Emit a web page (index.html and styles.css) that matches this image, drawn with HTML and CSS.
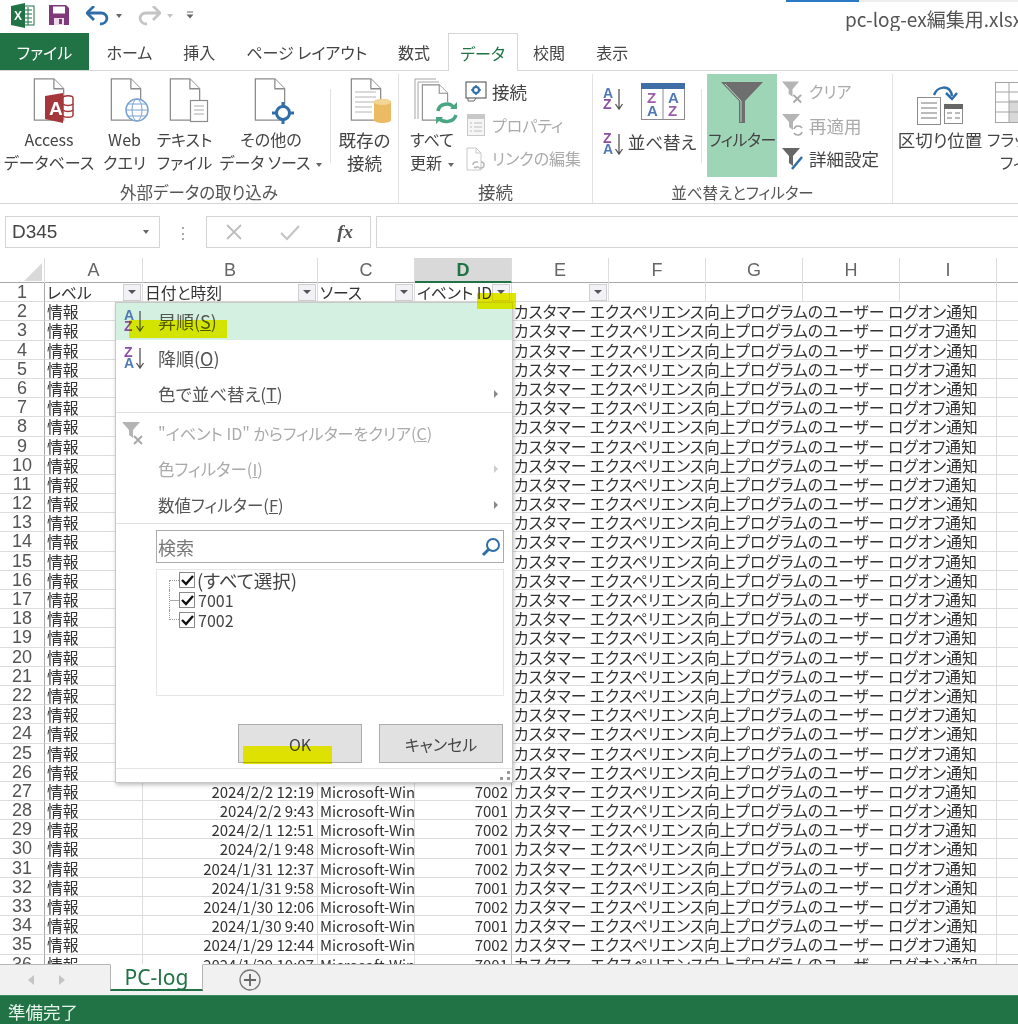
FILE: index.html
```html
<!DOCTYPE html>
<html lang="ja">
<head>
    <meta charset="UTF-8">
    <title>pc-log-ex編集用.xlsx - Excel</title>
    <link rel="stylesheet" href="styles.css">
</head>
<body>
<svg class="defs" width="0" height="0">
    <symbol id="doc" viewBox="0 0 32 44"><path d="M1 1H21L31 11V43H1Z" fill="#fff" stroke="#8c8c8c" stroke-width="1.3"/><path d="M21 1V11H31" fill="#fff" stroke="#8c8c8c" stroke-width="1.3"/></symbol>
    <symbol id="funnel-clear" viewBox="0 0 24 24"><path d="M1 1H19L12 9V17L8 14V9Z" fill="#b4b4b4"/><path d="M13 15L21 23M21 15L13 23" stroke="#a9a9a9" stroke-width="2"/></symbol>
</svg>

<div class="app">
    <!-- Title bar -->
    <div class="titlebar">
        <svg class="qat-excel" width="24" height="25" viewBox="0 0 24 25"><rect x="8" y="3" width="15" height="19" fill="#fff" stroke="#217346"/><path d="M13 7H21M13 11H21M13 15H21M13 19H21M17 4V22" stroke="#217346"/><path d="M0 3L14 0V25L0 22Z" fill="#217346"/><text x="3" y="17" class="ico-x">X</text></svg>
        <svg class="qat-save" width="20" height="20" viewBox="0 0 20 20"><path d="M0 0H17L20 3V20H0Z" fill="#80397b"/><rect x="4" y="1.500" width="12" height="7" fill="#fff"/><rect x="5" y="13" width="10" height="7" fill="#eadcea"/><rect x="10" y="14" width="3" height="5" fill="#80397b"/></svg>
        <svg class="qat-undo" width="24" height="20" viewBox="0 0 24 20"><path d="M2 7H15C23 7 23 18 14 18" fill="none" stroke="#2f6ea8" stroke-width="2.800"/><path d="M8 0L1 7L8 14" fill="none" stroke="#2f6ea8" stroke-width="2.800"/></svg>
        <span class="caret caret-qat"></span>
        <svg class="qat-redo" width="24" height="20" viewBox="0 0 24 20"><path d="M22 7H9C1 7 1 18 10 18" fill="none" stroke="#c4c4c4" stroke-width="2.800"/><path d="M16 0L23 7L16 14" fill="none" stroke="#c4c4c4" stroke-width="2.800"/></svg>
        <span class="caret caret-qat caret-off"></span>
        <svg class="qat-more" width="8" height="8" viewBox="0 0 8 8"><path d="M1 1H7" stroke="#666"/><path d="M0.500 3.500H7.500L4 7.500Z" fill="#666"/></svg>
        <div class="title-right">
            <div class="title-strip"><span class="strip-blue"></span><span class="strip-grey"></span></div>
            <div class="title-text">pc-log-ex編集用.xlsx</div>
        </div>
    </div>

    <!-- Tabs -->
    <div class="tabs">
        <div class="tab tab-file">ファイル</div>
        <div class="tab">ホーム</div>
        <div class="tab">挿入</div>
        <div class="tab">ページ レイアウト</div>
        <div class="tab">数式</div>
        <div class="tab tab-active">データ</div>
        <div class="tab">校閲</div>
        <div class="tab">表示</div>
    </div>

    <!-- Ribbon -->
    <div class="ribbon">
        <div class="group group-ext">
            <div class="group-body">
                <div class="cmd cmd-access">
                    <svg class="cmd-icon" width="52" height="48" viewBox="0 0 52 48"><use href="#doc" x="10" y="1" width="32" height="43"/><path d="M50 21C50 18 40 18 40 21V38C40 41 50 41 50 38Z" fill="#fff" stroke="#a4373a" stroke-width="1.500"/><path d="M40 27C42 29 48 29 50 27M40 33C42 35 48 35 50 33" fill="none" stroke="#a4373a" stroke-width="1.500"/><path d="M22 19L40 16V46L22 42Z" fill="#a4373a"/><text x="26" y="38" class="ico-access">A</text></svg>
                    <span>Access</span><span>データベース</span>
                </div>
                <div class="cmd cmd-web">
                    <svg class="cmd-icon" width="48" height="48" viewBox="0 0 48 48"><use href="#doc" x="9" y="1" width="32" height="43"/><circle cx="36" cy="33" r="11" fill="#fff" stroke="#7ba3cf" stroke-width="1.500"/><ellipse cx="36" cy="33" rx="5" ry="11" fill="none" stroke="#7ba3cf"/><path d="M25 33H47M27 27H45M27 39H45" stroke="#7ba3cf"/></svg>
                    <span>Web</span><span>クエリ</span>
                </div>
                <div class="cmd cmd-text">
                    <svg class="cmd-icon" width="48" height="48" viewBox="0 0 48 48"><use href="#doc" x="8" y="1" width="32" height="43"/><rect x="29.500" y="23.500" width="17" height="21" fill="#fff" stroke="#8c8c8c" stroke-width="1.200"/><path d="M33 29H43M33 33H43M33 37H43" stroke="#aaa"/></svg>
                    <span>テキスト</span><span>ファイル</span>
                </div>
                <div class="cmd cmd-other">
                    <svg class="cmd-icon" width="44" height="48" viewBox="0 0 44 48"><use href="#doc" x="2" y="1" width="32" height="43"/><circle cx="31" cy="36" r="6.500" fill="#fff" stroke="#2f6ea8" stroke-width="3"/><path d="M31 25V29M31 43V47M20 36H24M38 36H42" stroke="#2f6ea8" stroke-width="3"/></svg>
                    <span>その他の</span><span>データ ソース<i class="caret caret-inline"></i></span>
                </div>
                <div class="sep"></div>
                <div class="cmd cmd-existing big">
                    <svg class="cmd-icon" width="52" height="48" viewBox="0 0 52 48"><use href="#doc" x="11" y="1" width="32" height="43"/><path d="M16 15H37M16 20H37M16 25H37M16 30H33M16 35H33" stroke="#b4b4b4"/><path d="M35 25C35 21 52 21 52 25V43C52 47 35 47 35 43Z" fill="#eabb63"/><ellipse cx="43.500" cy="25" rx="8.500" ry="3" fill="#f3d596"/></svg>
                    <span>既存の</span><span>接続</span>
                </div>
            </div>
            <div class="group-label label-wide">外部データの取り込み</div>
        </div>

        <div class="group group-conn">
            <div class="group-body">
                <div class="cmd cmd-refresh">
                    <svg class="cmd-icon" width="52" height="48" viewBox="0 0 52 48"><path d="M9 42V2H30M12 42V5H33" fill="none" stroke="#a5a5a5"/><use href="#doc" x="15" y="7" width="28" height="37"/><circle cx="41" cy="36" r="11" fill="#fff"/><path d="M32 34C33 27 44 24 48 31M50 38C48 45 37 47 33 41" fill="none" stroke="#4aa583" stroke-width="3.500"/><path d="M44 32H51V25ZM37 40H30V47Z" fill="#4aa583"/></svg>
                    <span>すべて</span><span>更新<i class="caret caret-inline"></i></span>
                </div>
                <div class="stack">
                    <div class="stack-row big">
                        <svg width="22" height="22" viewBox="0 0 22 22"><rect x="1" y="1" width="20" height="16" fill="#fff" stroke="#666" stroke-width="1.200"/><path d="M3 17V20H9L11 17" fill="none" stroke="#666"/><circle cx="11" cy="9" r="3" fill="#fff" stroke="#2f6ea8" stroke-width="2"/><path d="M11 4V6M11 12V14M6 9H8M14 9H16" stroke="#2f6ea8" stroke-width="1.500"/></svg>
                        <span>接続</span>
                    </div>
                    <div class="stack-row stack-off">
                        <svg width="22" height="24" viewBox="0 0 22 24"><rect x="2.500" y="1.500" width="17" height="21" fill="#f6f6f6" stroke="#c8c8c8"/><path d="M3 2H19V6H3Z" fill="#c8c8c8"/><path d="M5 10H7M9 10H17M5 14H7M9 14H17M5 18H7M9 18H17" stroke="#bcbcbc"/></svg>
                        <span>プロパティ</span>
                    </div>
                    <div class="stack-row stack-off">
                        <svg width="22" height="24" viewBox="0 0 22 24"><path d="M2 23V1H11L16 6V23Z" fill="#fff" stroke="#c8c8c8"/><path d="M11 1V6H16" fill="none" stroke="#c8c8c8"/><path d="M8 18A3 3 0 0 1 11 15H13M14 20H12A3 3 0 0 1 9 20M16 15A3 3 0 0 1 19 18A3 3 0 0 1 16 21H14" fill="none" stroke="#b8b8b8" stroke-width="1.500"/></svg>
                        <span>リンクの編集</span>
                    </div>
                </div>
            </div>
            <div class="group-label big">接続</div>
        </div>

        <div class="group group-sort">
            <div class="group-body">
                <div class="sort-col">
                    <svg width="24" height="26" viewBox="0 0 24 26"><text x="0" y="11" class="ico-a">A</text><text x="0" y="22" class="ico-z">Z</text><path d="M16 2V21M12.500 17L16 22L19.500 17" fill="none" stroke="#555" stroke-width="1.300"/></svg>
                    <svg width="24" height="26" viewBox="0 0 24 26"><text x="0" y="11" class="ico-z">Z</text><text x="0" y="22" class="ico-a">A</text><path d="M16 2V21M12.500 17L16 22L19.500 17" fill="none" stroke="#555" stroke-width="1.300"/></svg>
                </div>
                <div class="cmd cmd-sort big">
                    <svg class="cmd-icon" width="44" height="38" viewBox="0 0 44 38"><rect x="0.500" y="0.500" width="43" height="36" fill="#fff" stroke="#8c8c8c"/><rect x="0" y="0" width="44" height="6" fill="#3f6ea6"/><path d="M22 6V37" stroke="#8c8c8c"/><text x="6" y="20" class="ico-z2">Z</text><text x="6" y="33" class="ico-a2">A</text><text x="27" y="20" class="ico-a2">A</text><text x="27" y="33" class="ico-z2">Z</text></svg>
                    <span>並べ替え</span>
                </div>
                <div class="sep sep-sort"></div>
                <div class="cmd cmd-filter">
                    <svg class="cmd-icon" width="42" height="44" viewBox="0 0 42 44"><path d="M0 1H42L24 20V42H18V20Z" fill="#6e6e6e"/><path d="M4 3L20 20V41" fill="none" stroke="#b9d9c8" stroke-width="1"/></svg>
                    <span>フィルター</span>
                </div>
                <div class="stack stack-filter">
                    <div class="stack-row stack-off">
                        <svg width="23" height="24"><use href="#funnel-clear"/></svg>
                        <span>クリア</span>
                    </div>
                    <div class="stack-row stack-off big">
                        <svg width="23" height="24" viewBox="0 0 23 24"><path d="M1 1H19L12 9V17L8 14V9Z" fill="#b4b4b4"/><path d="M13 16A4.500 4.500 0 0 1 21 15M21 19A4.500 4.500 0 0 1 13 20" fill="none" stroke="#a9a9a9" stroke-width="1.600"/></svg>
                        <span>再適用</span>
                    </div>
                    <div class="stack-row big">
                        <svg width="23" height="24" viewBox="0 0 23 24"><path d="M1 1H19L12 9V19L8 16V9Z" fill="#666"/><path d="M11 22L21 10" stroke="#2f6ea8" stroke-width="2.500"/></svg>
                        <span>詳細設定</span>
                    </div>
                </div>
            </div>
            <div class="group-label">並べ替えとフィルター</div>
        </div>

        <div class="group group-tools">
            <div class="group-body">
                <div class="cmd cmd-split big">
                    <svg class="cmd-icon" width="46" height="40" viewBox="0 0 46 40"><rect x="0.500" y="12.500" width="23" height="27" fill="#fff" stroke="#8c8c8c"/><path d="M4 18H20M4 23H20M4 28H20M4 33H20" stroke="#777"/><rect x="27.500" y="19.500" width="18" height="19" fill="#fff" stroke="#8c8c8c"/><rect x="27" y="19" width="19" height="5" fill="#666"/><path d="M30 28H35M38 28H43M30 33H35M38 33H43" stroke="#777"/><path d="M17 10C20 1 33 -1 35 11" fill="none" stroke="#2f6ea8" stroke-width="2.500"/><path d="M29 8L35 14L40 8" fill="none" stroke="#2f6ea8" stroke-width="2.500"/></svg>
                    <span>区切り位置</span>
                </div>
                <div class="cmd cmd-flash">
                    <svg class="cmd-icon" width="44" height="42" viewBox="0 0 44 42"><rect x="0.500" y="0.500" width="43" height="40" fill="#fff" stroke="#a5a5a5"/><rect x="14" y="18" width="30" height="22" fill="#d8d8d8"/><path d="M14 0V40M0 10H44M0 20H44M0 30H44" stroke="#a5a5a5"/></svg>
                    <span class="flash-text">フラッシュ</span><span class="flash-text">フィル</span>
                </div>
            </div>
        </div>
    </div>

    <!-- Formula bar -->
    <div class="formula">
        <div class="namebox"><span>D345</span><i class="caret"></i></div>
        <div class="formula-dots">⋮</div>
        <div class="formula-btns">
            <svg width="18" height="18" viewBox="0 0 18 18"><path d="M2 2L16 16M16 2L2 16" stroke="#bdbdbd" stroke-width="1.800"/></svg>
            <svg width="20" height="18" viewBox="0 0 20 18"><path d="M1 10L7 16L19 3" fill="none" stroke="#c4c4c4" stroke-width="2.200"/></svg>
            <span class="fx">fx</span>
        </div>
        <div class="formula-input"></div>
    </div>

    <!-- Sheet -->
    <div class="sheet">
        <div class="row row-head">
            <div class="corner"><span></span></div>
            <div class="col">A</div><div class="col">B</div><div class="col">C</div><div class="col col-on">D</div>
            <div class="col">E</div><div class="col">F</div><div class="col">G</div><div class="col">H</div><div class="col">I</div><div class="col col-rest"></div>
        </div>
        <div class="row row-filter">
            <div class="num">1</div>
            <div class="cell filter-cell">レベル<b class="fbtn"></b></div>
            <div class="cell filter-cell">日付と時刻<b class="fbtn"></b></div>
            <div class="cell filter-cell">ソース<b class="fbtn"></b></div>
            <div class="cell filter-cell">イベント ID<b class="fbtn"></b></div>
            <div class="cell filter-cell"><b class="fbtn fbtn-right"></b></div>
            <div class="cell"></div><div class="cell"></div><div class="cell"></div><div class="cell"></div><div class="cell-last"></div>
        </div>
        <div class="row"><div class="num">2</div><div class="cell">情報</div><div class="cell"></div><div class="cell"></div><div class="cell"></div><div class="cell msg">カスタマー エクスペリエンス向上プログラムのユーザー ログオン通知</div><div class="cell-last"></div></div>
        <div class="row"><div class="num">3</div><div class="cell">情報</div><div class="cell"></div><div class="cell"></div><div class="cell"></div><div class="cell msg">カスタマー エクスペリエンス向上プログラムのユーザー ログオフ通知</div><div class="cell-last"></div></div>
        <div class="row"><div class="num">4</div><div class="cell">情報</div><div class="cell"></div><div class="cell"></div><div class="cell"></div><div class="cell msg">カスタマー エクスペリエンス向上プログラムのユーザー ログオン通知</div><div class="cell-last"></div></div>
        <div class="row"><div class="num">5</div><div class="cell">情報</div><div class="cell"></div><div class="cell"></div><div class="cell"></div><div class="cell msg">カスタマー エクスペリエンス向上プログラムのユーザー ログオフ通知</div><div class="cell-last"></div></div>
        <div class="row"><div class="num">6</div><div class="cell">情報</div><div class="cell"></div><div class="cell"></div><div class="cell"></div><div class="cell msg">カスタマー エクスペリエンス向上プログラムのユーザー ログオン通知</div><div class="cell-last"></div></div>
        <div class="row"><div class="num">7</div><div class="cell">情報</div><div class="cell"></div><div class="cell"></div><div class="cell"></div><div class="cell msg">カスタマー エクスペリエンス向上プログラムのユーザー ログオフ通知</div><div class="cell-last"></div></div>
        <div class="row"><div class="num">8</div><div class="cell">情報</div><div class="cell"></div><div class="cell"></div><div class="cell"></div><div class="cell msg">カスタマー エクスペリエンス向上プログラムのユーザー ログオン通知</div><div class="cell-last"></div></div>
        <div class="row"><div class="num">9</div><div class="cell">情報</div><div class="cell"></div><div class="cell"></div><div class="cell"></div><div class="cell msg">カスタマー エクスペリエンス向上プログラムのユーザー ログオフ通知</div><div class="cell-last"></div></div>
        <div class="row"><div class="num">10</div><div class="cell">情報</div><div class="cell"></div><div class="cell"></div><div class="cell"></div><div class="cell msg">カスタマー エクスペリエンス向上プログラムのユーザー ログオン通知</div><div class="cell-last"></div></div>
        <div class="row"><div class="num">11</div><div class="cell">情報</div><div class="cell"></div><div class="cell"></div><div class="cell"></div><div class="cell msg">カスタマー エクスペリエンス向上プログラムのユーザー ログオフ通知</div><div class="cell-last"></div></div>
        <div class="row"><div class="num">12</div><div class="cell">情報</div><div class="cell"></div><div class="cell"></div><div class="cell"></div><div class="cell msg">カスタマー エクスペリエンス向上プログラムのユーザー ログオン通知</div><div class="cell-last"></div></div>
        <div class="row"><div class="num">13</div><div class="cell">情報</div><div class="cell"></div><div class="cell"></div><div class="cell"></div><div class="cell msg">カスタマー エクスペリエンス向上プログラムのユーザー ログオフ通知</div><div class="cell-last"></div></div>
        <div class="row"><div class="num">14</div><div class="cell">情報</div><div class="cell"></div><div class="cell"></div><div class="cell"></div><div class="cell msg">カスタマー エクスペリエンス向上プログラムのユーザー ログオン通知</div><div class="cell-last"></div></div>
        <div class="row"><div class="num">15</div><div class="cell">情報</div><div class="cell"></div><div class="cell"></div><div class="cell"></div><div class="cell msg">カスタマー エクスペリエンス向上プログラムのユーザー ログオフ通知</div><div class="cell-last"></div></div>
        <div class="row"><div class="num">16</div><div class="cell">情報</div><div class="cell"></div><div class="cell"></div><div class="cell"></div><div class="cell msg">カスタマー エクスペリエンス向上プログラムのユーザー ログオン通知</div><div class="cell-last"></div></div>
        <div class="row"><div class="num">17</div><div class="cell">情報</div><div class="cell"></div><div class="cell"></div><div class="cell"></div><div class="cell msg">カスタマー エクスペリエンス向上プログラムのユーザー ログオフ通知</div><div class="cell-last"></div></div>
        <div class="row"><div class="num">18</div><div class="cell">情報</div><div class="cell"></div><div class="cell"></div><div class="cell"></div><div class="cell msg">カスタマー エクスペリエンス向上プログラムのユーザー ログオン通知</div><div class="cell-last"></div></div>
        <div class="row"><div class="num">19</div><div class="cell">情報</div><div class="cell"></div><div class="cell"></div><div class="cell"></div><div class="cell msg">カスタマー エクスペリエンス向上プログラムのユーザー ログオフ通知</div><div class="cell-last"></div></div>
        <div class="row"><div class="num">20</div><div class="cell">情報</div><div class="cell"></div><div class="cell"></div><div class="cell"></div><div class="cell msg">カスタマー エクスペリエンス向上プログラムのユーザー ログオン通知</div><div class="cell-last"></div></div>
        <div class="row"><div class="num">21</div><div class="cell">情報</div><div class="cell"></div><div class="cell"></div><div class="cell"></div><div class="cell msg">カスタマー エクスペリエンス向上プログラムのユーザー ログオフ通知</div><div class="cell-last"></div></div>
        <div class="row"><div class="num">22</div><div class="cell">情報</div><div class="cell"></div><div class="cell"></div><div class="cell"></div><div class="cell msg">カスタマー エクスペリエンス向上プログラムのユーザー ログオン通知</div><div class="cell-last"></div></div>
        <div class="row"><div class="num">23</div><div class="cell">情報</div><div class="cell"></div><div class="cell"></div><div class="cell"></div><div class="cell msg">カスタマー エクスペリエンス向上プログラムのユーザー ログオフ通知</div><div class="cell-last"></div></div>
        <div class="row"><div class="num">24</div><div class="cell">情報</div><div class="cell"></div><div class="cell"></div><div class="cell"></div><div class="cell msg">カスタマー エクスペリエンス向上プログラムのユーザー ログオン通知</div><div class="cell-last"></div></div>
        <div class="row"><div class="num">25</div><div class="cell">情報</div><div class="cell"></div><div class="cell"></div><div class="cell"></div><div class="cell msg">カスタマー エクスペリエンス向上プログラムのユーザー ログオフ通知</div><div class="cell-last"></div></div>
        <div class="row"><div class="num">26</div><div class="cell">情報</div><div class="cell"></div><div class="cell"></div><div class="cell"></div><div class="cell msg">カスタマー エクスペリエンス向上プログラムのユーザー ログオン通知</div><div class="cell-last"></div></div>
        <div class="row"><div class="num">27</div><div class="cell">情報</div><div class="cell r">2024/2/2 12:19</div><div class="cell src">Microsoft-Win</div><div class="cell r">7002</div><div class="cell msg">カスタマー エクスペリエンス向上プログラムのユーザー ログオフ通知</div><div class="cell-last"></div></div>
        <div class="row"><div class="num">28</div><div class="cell">情報</div><div class="cell r">2024/2/2 9:43</div><div class="cell src">Microsoft-Win</div><div class="cell r">7001</div><div class="cell msg">カスタマー エクスペリエンス向上プログラムのユーザー ログオン通知</div><div class="cell-last"></div></div>
        <div class="row"><div class="num">29</div><div class="cell">情報</div><div class="cell r">2024/2/1 12:51</div><div class="cell src">Microsoft-Win</div><div class="cell r">7002</div><div class="cell msg">カスタマー エクスペリエンス向上プログラムのユーザー ログオフ通知</div><div class="cell-last"></div></div>
        <div class="row"><div class="num">30</div><div class="cell">情報</div><div class="cell r">2024/2/1 9:48</div><div class="cell src">Microsoft-Win</div><div class="cell r">7001</div><div class="cell msg">カスタマー エクスペリエンス向上プログラムのユーザー ログオン通知</div><div class="cell-last"></div></div>
        <div class="row"><div class="num">31</div><div class="cell">情報</div><div class="cell r">2024/1/31 12:37</div><div class="cell src">Microsoft-Win</div><div class="cell r">7002</div><div class="cell msg">カスタマー エクスペリエンス向上プログラムのユーザー ログオフ通知</div><div class="cell-last"></div></div>
        <div class="row"><div class="num">32</div><div class="cell">情報</div><div class="cell r">2024/1/31 9:58</div><div class="cell src">Microsoft-Win</div><div class="cell r">7001</div><div class="cell msg">カスタマー エクスペリエンス向上プログラムのユーザー ログオン通知</div><div class="cell-last"></div></div>
        <div class="row"><div class="num">33</div><div class="cell">情報</div><div class="cell r">2024/1/30 12:06</div><div class="cell src">Microsoft-Win</div><div class="cell r">7002</div><div class="cell msg">カスタマー エクスペリエンス向上プログラムのユーザー ログオフ通知</div><div class="cell-last"></div></div>
        <div class="row"><div class="num">34</div><div class="cell">情報</div><div class="cell r">2024/1/30 9:40</div><div class="cell src">Microsoft-Win</div><div class="cell r">7001</div><div class="cell msg">カスタマー エクスペリエンス向上プログラムのユーザー ログオン通知</div><div class="cell-last"></div></div>
        <div class="row"><div class="num">35</div><div class="cell">情報</div><div class="cell r">2024/1/29 12:44</div><div class="cell src">Microsoft-Win</div><div class="cell r">7002</div><div class="cell msg">カスタマー エクスペリエンス向上プログラムのユーザー ログオフ通知</div><div class="cell-last"></div></div>
        <div class="row"><div class="num">36</div><div class="cell">情報</div><div class="cell r">2024/1/29 10:07</div><div class="cell src">Microsoft-Win</div><div class="cell r">7001</div><div class="cell msg">カスタマー エクスペリエンス向上プログラムのユーザー ログオン通知</div><div class="cell-last"></div></div>

        <!-- Filter dropdown -->
        <div class="menu">
            <div class="item item-hot item-big">
                <svg class="item-icon" width="24" height="26" viewBox="0 0 24 26"><text x="0" y="11" class="ico-a">A</text><text x="0" y="22" class="ico-z">Z</text><path d="M16 2V21M12.500 17L16 22L19.500 17" fill="none" stroke="#555" stroke-width="1.300"/></svg>
                <span>昇順(<u>S</u>)</span>
            </div>
            <div class="item item-big">
                <svg class="item-icon" width="24" height="26" viewBox="0 0 24 26"><text x="0" y="11" class="ico-z">Z</text><text x="0" y="22" class="ico-a">A</text><path d="M16 2V21M12.500 17L16 22L19.500 17" fill="none" stroke="#555" stroke-width="1.300"/></svg>
                <span>降順(<u>O</u>)</span>
            </div>
            <div class="item item-line item-sort-color"><span>色で並べ替え(<u>T</u>)</span><i class="arrow"></i></div>
            <div class="item item-off item-clear"><svg class="item-icon item-icon-clear" width="24" height="24"><use href="#funnel-clear"/></svg><span>"イベント ID" からフィルターをクリア(<u>C</u>)</span></div>
            <div class="item item-off"><span>色フィルター(<u>I</u>)</span><i class="arrow"></i></div>
            <div class="item item-line"><span>数値フィルター(<u>F</u>)</span><i class="arrow"></i></div>
            <div class="search">
                <span>検索</span>
                <svg width="20" height="20" viewBox="0 0 20 20"><circle cx="12" cy="8" r="6" fill="none" stroke="#2f6ea8" stroke-width="2"/><path d="M8 12L2 18" stroke="#2f6ea8" stroke-width="3"/></svg>
            </div>
            <div class="checks">
                <div class="check-row"><i class="twig twig-top"></i><i class="box"><svg width="13" height="11" viewBox="0 0 13 11"><path d="M1 5L5 9L12 1" fill="none" stroke="#111" stroke-width="2.400"/></svg></i><span class="check-all">(すべて選択)</span></div>
                <div class="check-row"><i class="twig twig-mid"></i><i class="box"><svg width="13" height="11" viewBox="0 0 13 11"><path d="M1 5L5 9L12 1" fill="none" stroke="#111" stroke-width="2.400"/></svg></i><span>7001</span></div>
                <div class="check-row"><i class="twig twig-end"></i><i class="box"><svg width="13" height="11" viewBox="0 0 13 11"><path d="M1 5L5 9L12 1" fill="none" stroke="#111" stroke-width="2.400"/></svg></i><span>7002</span></div>
            </div>
            <div class="menu-btns">
                <div class="btn">OK</div>
                <div class="btn">キャンセル</div>
            </div>
            <div class="menu-foot"><i class="grip"></i></div>
        </div>

        <!-- Yellow marker strokes from the person who took the screenshot -->
        <div class="mark mark-id"></div>
        <div class="mark mark-asc"></div>
        <div class="mark mark-ok"></div>
    </div>

    <!-- Sheet tabs -->
    <div class="sheetbar">
        <i class="nav nav-left"></i>
        <i class="nav nav-right"></i>
        <div class="sheet-tab">PC-log</div>
        <svg class="sheet-add" width="22" height="22" viewBox="0 0 22 22"><circle cx="11" cy="11" r="10" fill="none" stroke="#777" stroke-width="1.300"/><path d="M11 5V17M5 11H17" stroke="#666" stroke-width="1.800"/></svg>
    </div>

    <!-- Status bar -->
    <div class="status">準備完了</div>
</div>
</body>
</html>
```

FILE: styles.css
```css
* {
    box-sizing: border-box;
}
html, body {
    margin: 0;
    padding: 0;
    background-color: #fff;
}
body {
    font-family: "Noto Sans CJK JP", "Noto Sans", sans-serif;
    font-feature-settings: "palt";
    color: #444;
}
.defs {
    position: absolute;
}
.app {
    width: 1018px;
    height: 1024px;
    display: flex;
    flex-direction: column;
    overflow: hidden;
}
i {
    font-style: normal;
}

/* svg letters */
.ico-a { font: bold 14px "Liberation Sans", sans-serif; fill: #4f78b5; }
.ico-z { font: bold 14px "Liberation Sans", sans-serif; fill: #8b4fa3; }
.ico-a2 { font: bold 15px "Liberation Sans", sans-serif; fill: #4f78b5; }
.ico-z2 { font: bold 15px "Liberation Sans", sans-serif; fill: #9a5fa8; }
.ico-x { font: bold 12px "Liberation Sans", sans-serif; fill: #fff; }
.ico-access { font: bold 19px "Liberation Sans", sans-serif; fill: #fff; }

/* Carets */
.caret {
    display: inline-block;
    width: 0;
    height: 0;
    border-left: 3.5px solid transparent;
    border-right: 3.5px solid transparent;
    border-top: 4px solid #666;
}
.caret-inline {
    margin-left: 6px;
    vertical-align: middle;
}
.caret-off {
    border-top-color: #c4c4c4;
}

/* Title bar */
.titlebar {
    height: 33px;
    flex: none;
    display: flex;
    align-items: flex-start;
    padding-left: 11px;
}
.qat-excel { margin-top: 3px; }
.qat-save { margin: 5px 0 0 14px; }
.qat-undo { margin: 6px 0 0 17px; }
.caret-qat { margin: 14px 0 0 6px; }
.qat-redo { margin: 6px 0 0 15px; }
.qat-more { margin: 11px 0 0 13px; }
.title-right {
    margin-left: auto;
    width: 232px;
    overflow: hidden;
}
.title-strip {
    display: flex;
    height: 2px;
}
.strip-blue {
    width: 73px;
    background-color: #2b79c2;
}
.strip-grey {
    flex: 1;
    background-color: #eee;
}
.title-text {
    margin: 4px 0 0 59px;
    font-size: 19px;
    line-height: 25px;
    white-space: nowrap;
    color: #555;
}

/* Tabs */
.tabs {
    height: 38px;
    flex: none;
    display: flex;
    border-bottom: 1px solid #d6d6d6;
}
.tab {
    padding: 0 15.5px;
    font-size: 16px;
    line-height: 38px;
    height: 37px;
    color: #444;
    white-space: nowrap;
}
.tab-file {
    width: 89px;
    margin-right: 2px;
    padding: 0;
    text-align: center;
    background-color: #217346;
    color: #fff;
}
.tab-active {
    margin: 0 0 -1px 2px;
    padding: 0;
    height: 38px;
    width: 70px;
    text-align: center;
    background-color: #fff;
    border: 1px solid #d6d6d6;
    border-bottom: none;
    color: #217346;
}

/* Ribbon */
.ribbon {
    height: 133px;
    flex: none;
    display: flex;
    padding-top: 3px;
    border-bottom: 1px solid #d6d6d6;
    font-size: 16px;
    line-height: 23px;
    overflow: hidden;
}
.big {
    font-size: 17.500px;
}
.group {
    border-right: 1px solid #e2e2e2;
    flex: none;
}
.group-ext { width: 399px; }
.group-conn { width: 194px; }
.group-sort { width: 300px; }
.group-tools {
    border-right: none;
    flex: 1;
    min-width: 0;
}
.group-body {
    display: flex;
    height: 103px;
}
.group-label {
    padding-top: 3px;
    line-height: 24px;
    text-align: center;
    font-size: 15.500px;
    color: #555;
}
.label-wide {
    font-size: 16.500px;
}
.group-label.big {
    font-size: 17.500px;
}
.cmd {
    flex: none;
    height: 103px;
    padding-top: 3px;
    display: flex;
    flex-direction: column;
    align-items: center;
    white-space: nowrap;
}
.cmd-icon {
    height: 48px;
    margin-bottom: 3px;
}
.cmd-access { width: 98px; }
.cmd-web { width: 53px; }
.cmd-text { width: 67px; }
.cmd-other {
    width: 112px;
    padding-right: 6px;
}
.cmd-other .cmd-icon {
    margin-left: 6px;
}
.cmd-existing { width: 67px; }
.cmd-refresh { width: 66px; }
.sep {
    width: 1px;
    height: 74px;
    margin-top: 15px;
    background-color: #e2e2e2;
}
.stack {
    padding-top: 1px;
    display: flex;
    flex-direction: column;
}
.stack-row {
    height: 33.500px;
    display: flex;
    align-items: center;
    gap: 5px;
    white-space: nowrap;
}
.stack-off {
    color: #aaa;
}
.sort-col {
    width: 34px;
    padding: 13px 0 0 10px;
    display: flex;
    flex-direction: column;
    gap: 19px;
}
.cmd-sort {
    width: 70px;
}
.cmd-sort .cmd-icon {
    height: 38px;
    margin: 6px 0 9px;
    margin-left: 2px;
}
.sep-sort {
    margin: 15px 5px 0 4px;
}
.cmd-filter {
    width: 70px;
    background-color: #9fd5b7;
    letter-spacing: -0.5px;
}
.cmd-filter .cmd-icon {
    height: 44px;
    margin: 4px 0 3px;
}
.stack-filter {
    margin-left: 4px;
}
.cmd-split {
    width: 94px;
}
.cmd-split .cmd-icon {
    height: 40px;
    margin: 8px 0 3px;
}
.cmd-flash {
    width: 90px;
    align-items: flex-start;
}
.cmd-flash .cmd-icon {
    height: 42px;
    margin: 5px 0 4px 8px;
}
.flash-text + .flash-text {
    padding-left: 13px;
}

/* Formula bar */
.formula {
    height: 54px;
    flex: none;
    display: flex;
    align-items: center;
    padding-left: 5px;
    padding-top: 1px;
}
.namebox {
    width: 155px;
    height: 32px;
    border: 1px solid #d4d4d4;
    display: flex;
    align-items: center;
    justify-content: space-between;
    padding: 0 10px 0 6px;
    font: 19px "Liberation Sans", sans-serif;
    color: #444;
}
.formula-dots {
    width: 46px;
    text-align: center;
    color: #999;
    font-size: 16px;
}
.formula-btns {
    width: 165px;
    height: 32px;
    border: 1px solid #d4d4d4;
    display: flex;
    align-items: center;
    justify-content: space-between;
    padding: 0 17px 0 18px;
}
.fx {
    font: italic bold 19px "Liberation Serif", serif;
    color: #555;
}
.formula-input {
    flex: 1;
    height: 32px;
    margin-left: 5px;
    margin-right: -4px;
    border: 1px solid #d4d4d4;
}

/* Sheet */
.sheet {
    position: relative;
    flex: 1;
    min-height: 0;
    overflow: hidden;
}
.row {
    height: 19.2px;
    display: grid;
    grid-template-columns: 45px 98px 175px 97px 97px repeat(5, 97px) 1fr;
    font-size: 15.800px;
    line-height: 19px;
    color: #333;
}
.row-head {
    height: 25px;
    font-size: 18px;
    line-height: 24px;
    color: #666;
    border-bottom: 1px solid #a8a8a8;
}
.corner {
    position: relative;
    border-right: 1px solid #dcdcdc;
}
.corner span {
    position: absolute;
    right: 2px;
    bottom: 2px;
    border-left: 18px solid transparent;
    border-bottom: 18px solid #d9d9d9;
}
.col {
    text-align: center;
    border-right: 1px solid #dcdcdc;
    font-family: "Liberation Sans", sans-serif;
}
.col-on {
    background-color: #d9d9d9;
    color: #217346;
    font-weight: bold;
    border-bottom: 2px solid #217346;
    height: 25px;
}
.col-rest {
    border-right: none;
}
.num {
    text-align: center;
    font-family: "Liberation Sans", sans-serif;
    font-size: 18px;
    line-height: 18px;
    color: #555;
    border-right: 1px solid #a8a8a8;
    border-bottom: 1px solid #dcdcdc;
    overflow: hidden;
}
.cell {
    min-width: 0;
    overflow: hidden;
    white-space: nowrap;
    padding: 0 2px;
    border-right: 1px solid #dcdcdc;
    border-bottom: 1px solid #dcdcdc;
}
.r {
    text-align: right;
    font-size: 15px;
    padding-right: 3px;
}
.src {
    font-size: 14.800px;
}
.msg {
    grid-column: span 5;
    border-left: 1px solid #b5b5b5;
    margin-left: -1px;
}
.cell-last {
    border-bottom: 1px solid #dcdcdc;
}
.filter-cell {
    display: flex;
    justify-content: space-between;
    align-items: center;
    padding-right: 0;
}
.fbtn {
    flex: none;
    width: 18px;
    height: 17px;
    margin-right: 1px;
    border: 1px solid #cfcfcf;
    background-color: #f1f1f6;
    display: flex;
    align-items: center;
    justify-content: center;
}
.fbtn::after {
    content: "";
    border-left: 4px solid transparent;
    border-right: 4px solid transparent;
    border-top: 4px solid #555;
}
.fbtn-right {
    margin-left: auto;
}

/* Filter dropdown */
.menu {
    position: absolute;
    left: 115px;
    top: 44px;
    width: 398px;
    height: 481px;
    background-color: #fff;
    border: 1px solid #c8c8c8;
    box-shadow: 1px 2px 4px rgba(0, 0, 0, 0.25);
    display: flex;
    flex-direction: column;
    font-size: 16.500px;
}
.item {
    height: 36.500px;
    flex: none;
    display: flex;
    align-items: center;
    padding: 0 14px 0 42px;
    position: relative;
    color: #555;
}
.item-big {
    font-size: 18px;
}
.item-sort-color {
    font-size: 17.500px;
    margin-bottom: 2px;
}
.item-clear {
    font-size: 16.100px;
}
.item-hot {
    background-color: #d3f0e0;
}
.item-off {
    color: #aaa;
}
.item-line {
    border-bottom: 1px solid #e2e2e2;
}
.item-icon {
    position: absolute;
    left: 8px;
    top: 6px;
}
.item-icon-clear {
    left: 5px;
}
.arrow {
    margin-left: auto;
    border-top: 4px solid transparent;
    border-bottom: 4px solid transparent;
    border-left: 4px solid #888;
}
.item-off .arrow {
    border-left-color: #ccc;
}
.search {
    height: 33px;
    flex: none;
    margin: 6px 8px 0 40px;
    border: 1px solid #ababab;
    display: flex;
    align-items: center;
    justify-content: space-between;
    padding: 0 2px 0 1px;
    font-size: 18px;
    color: #777;
}
.checks {
    height: 127px;
    flex: none;
    margin: 6px 8px 0 40px;
    border: 1px solid #e6e6e6;
    padding: 0 0 0 12px;
    font-size: 16px;
    color: #444;
}
.check-row {
    height: 20px;
    display: flex;
    align-items: center;
}
.twig {
    width: 10px;
    flex: none;
}
.twig-top {
    height: 10px;
    align-self: flex-end;
    border-top: 1px dotted #999;
    border-left: 1px dotted #999;
}
.twig-mid {
    height: 20px;
    border-left: 1px dotted #999;
    background: linear-gradient(#aaa, #aaa) 0 10px / 10px 1px no-repeat;
}
.twig-end {
    height: 10px;
    align-self: flex-start;
    border-left: 1px dotted #999;
    border-bottom: 1px dotted #999;
}
.box {
    width: 16px;
    height: 16px;
    margin-right: 3px;
    flex: none;
    border: 1px solid #8a8a8a;
    display: flex;
    align-items: center;
    justify-content: center;
}
.check-all {
    margin-left: -1px;
    font-size: 18.500px;
}
.menu-btns {
    display: flex;
    justify-content: flex-end;
    gap: 17px;
    margin: 28px 9px 0 0;
}
.btn {
    width: 124px;
    height: 39px;
    border: 1px solid #acacac;
    background-color: #e1e1e1;
    color: #444;
    font-size: 16px;
    line-height: 38px;
    text-align: center;
}
.menu-foot {
    margin-top: 5px;
    flex: 1;
    border-top: 1px solid #e6e6e6;
    display: flex;
    justify-content: flex-end;
    align-items: center;
    padding-right: 2px;
}
.grip {
    width: 10px;
    height: 9px;
    background:
        linear-gradient(#999, #999) 7px 0 / 3px 3px no-repeat,
        linear-gradient(#999, #999) 7px 6px / 3px 3px no-repeat,
        linear-gradient(#999, #999) 0 6px / 3px 3px no-repeat;
}

/* Yellow marker strokes */
.mark {
    position: absolute;
    background-color: #dfe400;
    mix-blend-mode: darken;
}
.mark-id {
    left: 477px;
    top: 35px;
    width: 39px;
    height: 16px;
}
.mark-asc {
    left: 129px;
    top: 62px;
    width: 98px;
    height: 18px;
}
.mark-ok {
    left: 243px;
    top: 488px;
    width: 89px;
    height: 18px;
}

/* Sheet tabs */
.sheetbar {
    height: 31px;
    flex: none;
    display: flex;
    align-items: flex-start;
    background-color: #f1f1f1;
    border-top: 1px solid #b5b5b5;
    padding-left: 28px;
}
.nav {
    margin-top: 10px;
    border-top: 5px solid transparent;
    border-bottom: 5px solid transparent;
}
.nav-left {
    border-right: 6px solid #c4c4c4;
}
.nav-right {
    margin-left: 25px;
    border-left: 6px solid #c4c4c4;
}
.sheet-tab {
    width: 93px;
    height: 27px;
    margin-left: 45px;
    margin-top: -1px;
    background-color: #fff;
    border: 1px solid #b5b5b5;
    border-top-color: #fff;
    border-bottom: 2px solid #217346;
    font-size: 21px;
    line-height: 24px;
    text-align: center;
    color: #217346;
    font-family: "Noto Sans", sans-serif;
}
.sheet-add {
    margin: 4px 0 0 36px;
}

/* Status bar */
.status {
    height: 29px;
    flex: none;
    background-color: #217346;
    color: #e8f2ec;
    font-size: 17.500px;
    line-height: 32px;
    padding-left: 8px;
    border-top: 1px solid #3d8a61;
    overflow: hidden;
}
```
